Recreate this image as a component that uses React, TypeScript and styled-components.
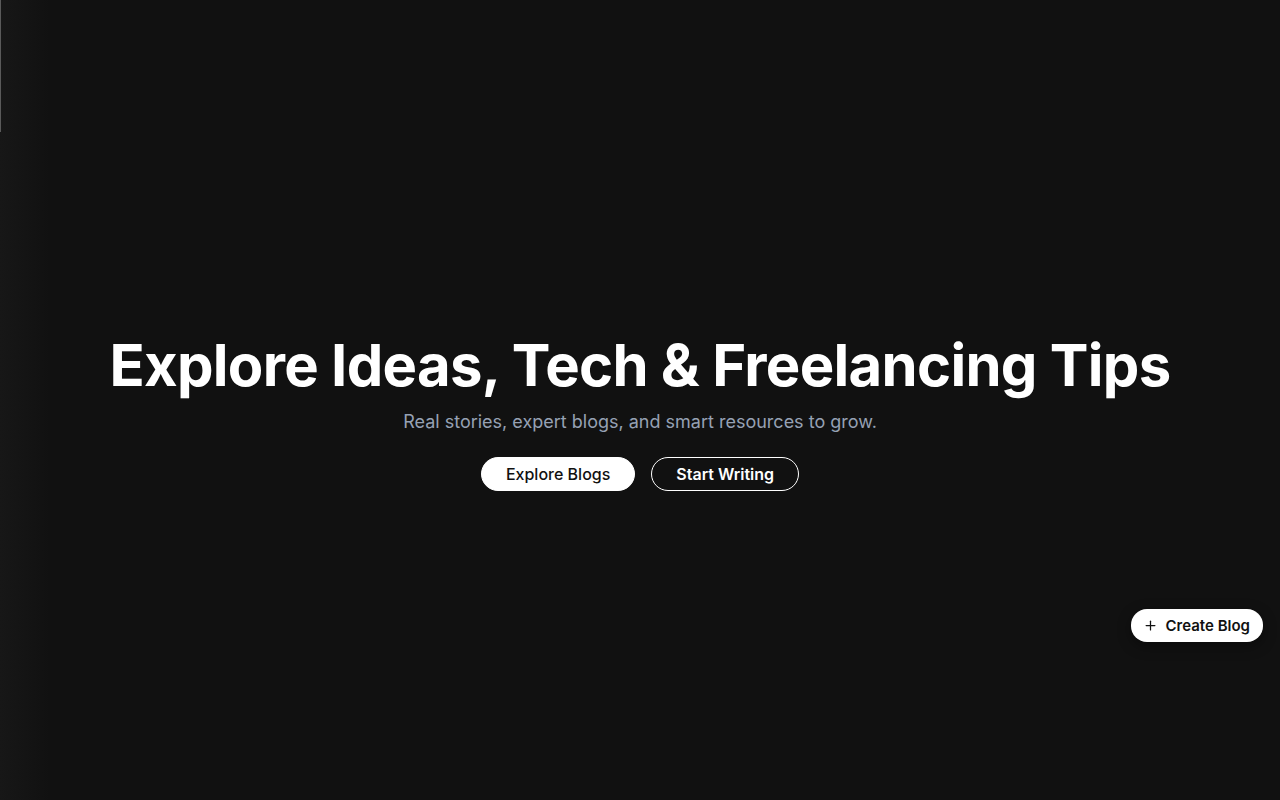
import React from 'react';
import styled, {createGlobalStyle} from 'styled-components';
import {Plus} from 'lucide-react';

const GlobalStyle = createGlobalStyle`
  html, body {
    margin: 0;
    padding: 0;
    background: #111111;
    font-family: Inter, "Noto Sans", sans-serif;
  }
`;

const App: React.FC = () => {
    return (
        <Page>
            <GlobalStyle/>
            <EdgeShade/>
            <Hero>
                <Title>Explore Ideas, Tech &amp; Freelancing Tips</Title>
                <Subtitle>Real stories, expert blogs, and smart resources to grow.</Subtitle>
                <Actions>
                    <Button $variant="solid">Explore Blogs</Button>
                    <Button $variant="outline">Start Writing</Button>
                </Actions>
            </Hero>
            <FloatingBtn>
                <Plus size={15} strokeWidth={2}/>
                <span>Create Blog</span>
            </FloatingBtn>
        </Page>
    )
};

export default App

const Page = styled.div`
  position: relative;
  width: 100%;
  height: 800px;
  background: #111111;
  display: flex;
  align-items: center;
  justify-content: center;
  overflow: hidden;
`;

const EdgeShade = styled.div`
  position: absolute;
  left: 0;
  top: 0;
  bottom: 0;
  width: 50px;
  background: linear-gradient(90deg, #171717, rgba(17, 17, 17, 0));

  &::before {
    content: '';
    position: absolute;
    left: 0;
    top: 0;
    width: 1px;
    height: 132px;
    background: #5a5a5a;
  }
`;

const Hero = styled.section`
  display: flex;
  flex-direction: column;
  align-items: center;
  margin-top: 22px;
`;

const Title = styled.h1`
  margin: 0;
  color: #fff;
  font-size: 58px;
  font-weight: 700;
  letter-spacing: -0.7px;
  line-height: 1.2;
  text-align: center;
`;

const Subtitle = styled.p`
  margin: 10px 0 0;
  color: #96a1b4;
  font-size: 18px;
  font-weight: 400;
`;

const Actions = styled.div`
  display: flex;
  gap: 16px;
  margin-top: 25px;
`;

const Button = styled.button<{ $variant: 'solid' | 'outline' }>`
  height: 34px;
  padding: 0 24px;
  border-radius: 17px;
  font-family: inherit;
  font-size: 16px;
  font-weight: ${p => p.$variant === 'solid' ? 500 : 600};
  cursor: pointer;
  border: 1px solid #fff;
  background: ${p => p.$variant === 'solid' ? '#fff' : 'transparent'};
  color: ${p => p.$variant === 'solid' ? '#111' : '#fff'};
`;

const FloatingBtn = styled.button`
  position: absolute;
  right: 17px;
  bottom: 158px;
  height: 33px;
  display: flex;
  align-items: center;
  gap: 8px;
  padding: 0 13px 0 12px;
  border: none;
  border-radius: 16px;
  background: #fff;
  color: #111;
  font-family: inherit;
  font-size: 15px;
  font-weight: 600;
  box-shadow: 0 4px 14px rgba(0, 0, 0, 0.4);
`;
